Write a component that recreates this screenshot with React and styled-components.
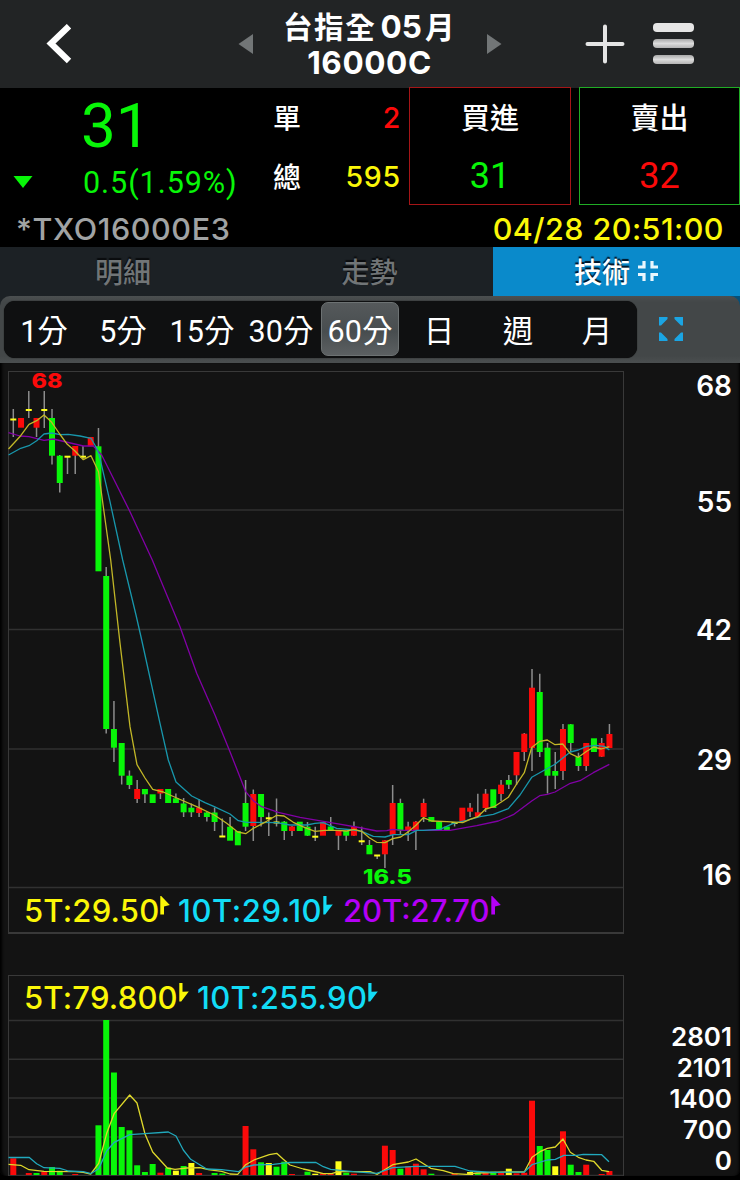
import React from "react";
import styled, { createGlobalStyle } from "styled-components";

const GREEN = "#08f608";
const RED = "#fb0a0a";
const YELLOW = "#fbf708";
const CYAN = "#12dcf6";
const PURPLE = "#b400f6";
const UI = `Inter, "Noto Sans CJK TC", sans-serif`;
const NUM = `Roboto, "Noto Sans CJK TC", sans-serif`;

const Global = createGlobalStyle`
  * { box-sizing: border-box; }
  body { margin: 0; background: #000; font-family: ${UI}; }
`;

const Screen = styled.div`
  width: 740px;
  height: 1180px;
  overflow: hidden;
  background: #000;
  display: flex;
  flex-direction: column;
  color: #fff;
`;

/* ---------- navigation bar ---------- */
const NavBar = styled.header`
  height: 88px;
  flex: none;
  background: #222425;
  display: flex;
  align-items: center;
  padding-left: 46px;
`;
const NavIcon = styled.svg`
  flex: none;
  display: block;
  margin-left: ${(p) => p.$gap || 0}px;
`;
const Title = styled.h1`
  margin: 0 0 0 29px;
  width: 175px;
  text-align: center;
  font-size: 31.5px;
  line-height: 37px;
  font-weight: 700;
  white-space: nowrap;
`;
const TitleLine = styled.div`
  height: 37px;
  letter-spacing: ${(p) => p.$ls || 0}px;
`;
const Han = styled.span`
  font-family: "Noto Sans CJK TC", sans-serif;
  font-weight: 700;
  font-size: 29.5px;
  letter-spacing: 1.7px;
`;
const Month = styled.span`
  margin: 0 3px 0 4px;
`;

/* ---------- quote ---------- */
const Quote = styled.section`
  height: 159px;
  flex: none;
  background: #000;
`;
const QuoteTop = styled.div`
  height: 117px;
  display: flex;
`;
const LastBlock = styled.div`
  width: 273px;
  flex: none;
`;
const LastPrice = styled.div`
  font-family: ${NUM};
  color: ${GREEN};
  font-size: 62px;
  line-height: 75px;
  height: 75px;
  padding-left: 81px;
`;
const ChangeRow = styled.div`
  display: flex;
  align-items: center;
  height: 38px;
  padding-left: 13px;
  font-family: ${NUM};
  font-size: 30.5px;
  color: ${GREEN};
  letter-spacing: 0.95px;
`;
const Change = styled.span`
  margin-left: 50px;
`;
const Volumes = styled.div`
  width: 128px;
  flex: none;
`;
const VolumeRow = styled.div`
  height: 59px;
  display: flex;
  align-items: center;
  justify-content: space-between;
  font-size: 28px;
  font-weight: 500;
  padding-bottom: 1px;
`;
const VolumeValue = styled.span`
  font-size: 28.5px;
  color: ${(p) => p.$color};
  letter-spacing: 0.8px;
  padding-top: 1px;
`;
const OrderButton = styled.button`
  width: ${(p) => p.$w}px;
  height: 118px;
  margin: -1px 0 0 8px;
  padding: 0;
  background: #000;
  border: 1px solid ${(p) => p.$edge};
  color: #fff;
  font-family: "Noto Sans CJK TC", sans-serif;
  font-weight: 500;
  font-size: 29px;
  display: flex;
  flex-direction: column;
  align-items: center;
`;
const OrderLabel = styled.span`
  height: 59px;
  line-height: 57px;
`;
const OrderPrice = styled.span`
  height: 58px;
  line-height: 61px;
  font-family: ${NUM};
  font-weight: 400;
  font-size: 36px;
  color: ${(p) => p.$color};
`;
const QuoteFoot = styled.div`
  height: 42px;
  display: flex;
  justify-content: space-between;
  align-items: center;
  padding: 5px 16px 0 16px;
  font-size: 30.5px;
  font-weight: 500;
`;
const Code = styled.span`
  color: #a0a3a4;
  letter-spacing: 0.6px;
`;
const Time = styled.span`
  color: ${YELLOW};
  letter-spacing: 0.45px;
`;

/* ---------- tabs ---------- */
const Tabs = styled.nav`
  height: 49px;
  flex: none;
  display: grid;
  grid-template-columns: 246px 247px 247px;
`;
const Tab = styled.div`
  display: flex;
  align-items: center;
  justify-content: center;
  gap: 7px;
  padding-bottom: 2px;
  font-size: 28px;
  font-weight: 500;
  color: ${(p) => (p.$on ? "#fff" : "#717577")};
  background: ${(p) => (p.$on ? "#0a8acb" : "#1c2125")};
  text-shadow: 0 -2px 1px ${(p) => (p.$on ? "#012" : "#0a0c0e")};
`;

/* ---------- interval picker ---------- */
const IntervalWrap = styled.div`
  height: 67px;
  flex: none;
  background: linear-gradient(90deg, #1c2125 0 493px, #05507a 493px);
`;
const IntervalBar = styled.div`
  height: 67px;
  background: linear-gradient(#4b4f50 0, #434748 6px, #434748 60px, #4a4e4f 66px);
  border-radius: 10px 10px 0 0;
  display: flex;
  align-items: center;
  padding: 0 0 1px 4px;
`;
const Segments = styled.div`
  width: 633px;
  height: 57px;
  background: #0f1011;
  border-radius: 11px;
  display: grid;
  grid-template-columns: repeat(8, 79px);
  padding-top: 1px;
  box-shadow: 0 0 1px #000;
`;
const Segment = styled.div`
  height: 54px;
  margin: 0 0 0 1px;
  border-radius: 7px;
  display: flex;
  align-items: center;
  justify-content: center;
  white-space: nowrap;
  font-family: ${NUM};
  font-size: 30.5px;
  padding-top: 1px;
  border: 1px solid ${(p) => (p.$on ? "#6d7273" : "transparent")};
  background: ${(p) => (p.$on ? "linear-gradient(#55595b, #484d4f 55%, #5c6062)" : "none")};
`;

/* ---------- charts ---------- */
const ChartArea = styled.main`
  height: 813px;
  flex: none;
  background: #131313;
  box-shadow: inset 4px 0 3px -2px #000, inset -3px 0 3px -2px #000;
  border-radius: 0 0 6px 6px;
  padding: 8px 0 0 8px;
`;
const Panel = styled.section`
  display: flex;
  height: ${(p) => p.$h}px;
  margin-bottom: ${(p) => p.$mb || 0}px;
`;
const Frame = styled.div`
  width: 616px;
  flex: none;
  border: 1px solid #393939;
  border-bottom-width: ${(p) => p.$bottom}px;
`;
const Plot = styled.svg`
  display: block;
  margin-left: -1px;
  overflow: visible;
`;
const Legend = styled.div`
  display: flex;
  align-items: center;
  height: 44px;
  padding: 0 0 ${(p) => p.$lift || 0}px 15px;
  font-size: 31px;
  font-weight: 500;
`;
const LegendItem = styled.span`
  display: flex;
  align-items: center;
  white-space: nowrap;
  color: ${(p) => p.$color};
  width: ${(p) => p.$w}px;
  letter-spacing: ${(p) => p.$ls || 0}px;
`;
const Flag = styled.svg`
  flex: none;
  margin: -9px 0 0 1px;
`;
const Axis = styled.div`
  flex: 1;
  display: grid;
  grid-template-rows: ${(p) => p.$rows};
  padding: ${(p) => p.$top}px 8px 0 0;
  text-align: right;
  font-weight: 600;
  font-size: ${(p) => p.$size}px;
  line-height: 30px;
`;

const STEP = 7.742;
const cx = (i) => 13.3 + i * STEP;

// [kind, body top, body bottom, wick top, wick bottom]
const candles = [
  ["y", 418.5, 420.5, 409, 437], ["r", 418, 427.7], ["y", 409, 411, 391, 418], ["r", 418, 427.7, 418, 437],
  ["y", 409, 411, 391, 428], ["g", 418, 455.7, 409, 464.5], ["g", 455.7, 483, 455, 492.5], ["y", 455.7, 457.7, 456, 474],
  ["r", 446, 455.7, 446, 474], ["y", 455.7, 457.7, 446, 459], ["r", 437, 446.3], ["g", 446.3, 571.3, 428, 571],
  ["g", 576, 729, 567, 733.5], ["g", 729, 747.7, 701, 762], ["g", 743, 775.7, 743, 784.5], ["g", 775.7, 785, 770.5, 789],
  ["r", 789, 799, 780, 803], ["g", 789, 794.3, 789, 803], ["g", 794.3, 803], ["r", 789, 793.5, 789, 799],
  ["g", 789, 803], ["g", 798.3, 803, 793.5, 803], ["g", 803.5, 812.3, 798, 817], ["g", 807.7, 812.3, 803.5, 817],
  ["r", 807.7, 813, 799, 817], ["g", 812.5, 817, 812, 821.5], ["g", 812.5, 822, 807.5, 831], ["y", 835.5, 837.5, 818.5, 837],
  ["g", 826.7, 840.7, 817, 840], ["g", 831, 845.3], ["g", 803, 826.7, 780, 831], ["r", 794, 826, 789.5, 841],
  ["g", 794, 817, 794, 826.5], ["y", 817.3, 819.3, 812.5, 836], ["y", 821.5, 823.5, 798.5, 826.5], ["g", 821.7, 831, 821, 840],
  ["r", 826.5, 831, 826, 836], ["g", 821.7, 831], ["g", 826.7, 835.7, 822, 836], ["y", 835.7, 837.7, 826.7, 841],
  ["r", 822, 835.7], ["g", 826.5, 831, 817, 831], ["r", 831, 835.7, 831, 850], ["g", 831, 835.7, 831, 841],
  ["r", 826.7, 835.7, 821.5, 836], ["y", 840.3, 842.3, 826.7, 845], ["g", 845, 854.3, 840, 854], ["y", 854.5, 856.5, 856, 859],
  ["r", 840.3, 854.3, 840, 868], ["r", 803, 835, 785, 845], ["g", 803, 830.7, 798.7, 835], ["r", 826.5, 831, 821.7, 841],
  ["r", 821.7, 831, 821, 850], ["r", 803, 817, 798.7, 822], ["g", 817, 821.7], ["g", 821.7, 830.7],
  ["g", 826.5, 830.7], ["y", 822, 824, 822, 826.5], ["r", 807.7, 821.3], ["r", 807.7, 811.7, 803, 817],
  ["r", 812.3, 816.7, 793.7, 817], ["r", 793.7, 808, 789, 812], ["g", 789.3, 808], ["r", 784.7, 794, 780, 801],
  ["g", 780, 784.7, 775, 789], ["r", 752, 775.3, 752, 785], ["r", 733.7, 752, 733, 761], ["r", 687.7, 748, 669, 771],
  ["g", 692, 752, 673.7, 757], ["g", 747.7, 775.7, 743, 793.5], ["g", 771, 775.7, 752, 789], ["r", 729, 771, 724, 780],
  ["g", 724.3, 743, 724, 752], ["g", 757, 766, 752.7, 771], ["r", 743, 766, 743, 771], ["g", 738.3, 752],
  ["r", 743, 756.7, 738, 757], ["r", 734, 748, 724, 748],
];
const price5 = "8.5,449 20.7,435.7 29,424.3 36.7,420.7 44,415 51.7,422.3 59.7,434 67.3,444.3 75,451 83.3,459.7 91,455.7 98.5,471.7 105,519 110.7,560 120,643 130,726.7 137,764.7 145,778 152.7,789.3 163.3,792 176.7,798 196.7,806.7 214.3,815 226.7,823.3 237.7,832 245.7,833.7 253.3,828.3 266.7,821.3 276.7,815.3 284,816 293.3,822.3 305,827.7 315,831.3 325,830.3 336.7,830.3 346.7,831 354,829.3 361.7,831.3 369.3,837.7 376.7,842.3 385,842.7 392.7,838.7 400.7,837 408.3,831.7 416,825.3 423.3,817.7 431.7,821 447,821.7 462.7,822.7 470,819.3 477.7,816.7 485.7,809 494,806.7 501.7,801.7 508.3,797.3 516,785 524.3,772.7 531.7,747.5 539.7,741.3 547.3,740 555,744.7 562.7,744 570.3,753.7 578.3,757.3 586.7,751.3 593.7,747 601.3,749 609.3,746.7";
const price10 = "8.5,455 20.7,448.3 29,445.7 36.7,440.7 44,434 51.7,433 60,434.7 68.3,434.3 80,436 91,438.3 96.7,448.3 100,458.3 110,501.7 122.7,560 136,615 141.7,640 160,723.3 168.3,760 176,782 191.7,796 205,802.7 214.3,806.7 230,814 238.3,820.7 246.7,822.3 276.7,822.7 290,825 306.7,825 315,823.3 323.3,822.7 336.7,828.3 354,830 361.7,831.3 373.3,836.3 385,837 393.3,834.7 408.3,834.7 416.7,830.3 423.3,830.3 440,829.3 453.3,823.3 466.7,820.3 480,816.7 493.3,814.3 508.3,808.7 520,795 531.7,777.3 543.3,770.7 555,764.3 570.3,752 578.3,750 586.7,746.3 596.7,745.3 605,746.7 609.3,750";
const price20 = "8.5,432.7 20,436 29,436.7 44,440.3 53.3,439 83.3,446 93.3,446 101.7,455 130,511.7 152.3,560 180,626.7 196.7,673.3 215,715 230,751.7 245.7,791.7 253.3,800.7 261.7,806.7 278.3,812.3 300,817.3 336.7,823.7 361.7,828 376.7,831 386.7,830.7 392.7,829.3 403.3,830.3 450,830.3 476.7,825.7 498.3,821 513.3,814.7 531.7,801 539.7,795.7 547.3,794.3 555,792 570.3,783.3 580,780.7 593.3,772.7 609.3,764.3";

// [slot, kind, top]
const volumes = [
  [0, "r", 1158.3], [2, "r", 1173], [3, "g", 1173], [4, "r", 1171.7], [5, "g", 1167], [6, "g", 1170.7], [8, "r", 1174],
  [11, "g", 1125.3], [12, "g", 1020], [13, "g", 1072.5], [14, "g", 1127], [15, "g", 1130.3], [16, "g", 1165.3],
  [17, "g", 1172], [18, "g", 1164], [19, "r", 1172.7], [20, "g", 1167.7], [21, "y", 1170.7], [22, "g", 1166],
  [23, "y", 1163], [24, "r", 1173], [26, "g", 1173], [27, "g", 1173.5], [30, "r", 1126], [31, "r", 1149.3],
  [32, "g", 1162.3], [33, "y", 1163], [34, "g", 1166.7], [35, "g", 1161.7], [36, "r", 1174], [38, "g", 1171.7],
  [39, "y", 1173.7], [40, "r", 1173.5], [41, "r", 1174], [42, "y", 1161.3], [43, "g", 1172.7], [44, "r", 1173.7],
  [48, "r", 1145.7], [49, "r", 1150], [50, "g", 1168.7], [51, "r", 1166.3], [52, "r", 1163.7], [53, "r", 1169.3],
  [54, "g", 1173.7], [57, "r", 1173.7], [59, "y", 1172], [60, "g", 1173], [61, "r", 1172.3], [62, "g", 1171.7],
  [63, "r", 1173], [64, "y", 1168.7], [65, "r", 1173.3], [66, "r", 1172.7], [67, "r", 1100.7], [68, "g", 1146],
  [69, "g", 1150], [70, "y", 1166.3], [71, "r", 1131.3], [72, "g", 1164.7], [73, "g", 1172], [74, "r", 1164.7],
  [76, "r", 1174], [77, "r", 1171],
];
const vol5 = "8.5,1164.3 20.7,1165.3 29,1169.7 44,1171.3 75,1171.7 83.3,1172.3 90.7,1174 98.7,1163.3 106.7,1133.3 114.3,1113.3 129.7,1095 137,1103 145,1134 152.7,1152 167.3,1168 175,1169.3 186.7,1168 200,1167.7 208.3,1169.7 221.7,1171.3 230,1174 237.7,1174.3 245.7,1164.7 254,1160 269.3,1154.7 276.7,1153.3 283.3,1159.3 290,1165 303.3,1169 316.7,1172 323.3,1173.7 331.7,1173.7 338.3,1171.7 370,1171.7 377.3,1174.3 392.7,1164.7 408.3,1162 416,1159 430.7,1168.3 443.3,1170.7 453.3,1173.7 466.7,1174.3 476.7,1173 506.7,1172 524.3,1172 532,1157.3 540,1151.7 547.3,1148.3 555.3,1147 563,1139 570.3,1152.3 578.3,1157.3 586,1160 593.7,1161.3 601.7,1170.3 609,1171.7";
const vol10 = "8.5,1157.5 29,1157.3 36.7,1163.7 44,1167.7 60,1168.3 68.3,1171 83.3,1171.7 90.7,1173.7 98.7,1168.7 106.7,1151 114.3,1142.3 129.7,1134.7 145,1133.7 168.3,1132 176,1136 183.3,1150 190.7,1159.3 206.7,1169 221.7,1169.7 238.3,1171.7 245.7,1167 254,1165 273.3,1164.3 290,1162.3 316,1162.5 323.3,1166.7 330.7,1169.3 353.3,1171.7 376.7,1173.3 392.7,1167.7 416,1166.3 455,1166.3 470,1171 493.3,1172.3 524.3,1172 532,1164.7 547.3,1160 555.3,1159.3 564,1155.3 577,1155.3 583.3,1154.3 601.7,1154.7 609,1161.7";

const FILL = { r: RED, g: GREEN, y: "#ffff1a" };

const Series = ({ points, color }) => (
  <polyline points={points} fill="none" stroke={color} strokeWidth="1.3" strokeLinejoin="round" />
);

const GridLine = ({ y }) => <line x1="9" x2="623" y1={y} y2={y} stroke="#313131" strokeWidth="1.4" />;

const PriceChart = () => (
  <Plot width="616" height="516" viewBox="8 372 616 516">
    {[510, 629.5, 749, 887.5].map((y) => <GridLine key={y} y={y} />)}
    {candles.map(([k, t, b, wt, wb], i) => (
      <g key={i}>
        {wt && <line x1={cx(i)} x2={cx(i)} y1={wt} y2={wb} stroke="#8d8d8d" strokeWidth="1.5" />}
        <rect x={cx(i) - 3} width="6" y={t} height={b - t} fill={FILL[k]} />
      </g>
    ))}
    <Series points={price20} color="#8200a6" />
    <Series points={price10} color="#1897ac" />
    <Series points={price5} color="#c2b727" />
    <text x="31.5" y="388.3" fontSize="20.5" fontWeight="800" fill={RED} textLength="31" lengthAdjust="spacingAndGlyphs">68</text>
    <text x="363" y="884" fontSize="20.5" fontWeight="800" fill={GREEN} textLength="49" lengthAdjust="spacingAndGlyphs">16.5</text>
  </Plot>
);

const VolumeChart = () => (
  <Plot width="616" height="156" viewBox="8 1020 616 156">
    {[1020.5, 1059.3, 1098, 1137, 1175.4].map((y) => <GridLine key={y} y={y} />)}
    {volumes.map(([i, k, t]) => (
      <rect key={i} x={cx(i) - 3} width="6" y={t} height={1175 - t} fill={FILL[k]} />
    ))}
    <Series points={vol5} color="#dfd92b" />
    <Series points={vol10} color="#21a9bd" />
  </Plot>
);

const TrendFlag = ({ up }) => (
  <Flag width="10" height="19" viewBox="0 0 10 19" fill="currentColor">
    {up ? <path d="M0.3 0H1.2L9.8 9L4 10.5V18.5H0.3Z" /> : <path d="M0.3 0H3.5V8.8L9.8 8.4L2.2 18.5H0.3Z" />}
  </Flag>
);

export default function App() {
  return (
    <Screen>
      <Global />
      <NavBar>
        <NavIcon width="26" height="40" viewBox="0 0 26 40">
          <path d="M23 2.2 L5 19.5 L23 37" fill="none" stroke="#fff" strokeWidth="6.3" />
        </NavIcon>
        <NavIcon $gap={166} width="15" height="20" viewBox="0 0 15 20">
          <path d="M15 0V20L0.5 10Z" fill="#727677" />
        </NavIcon>
        <Title>
          <TitleLine><Han>台指全</Han><Month>05</Month><Han>月</Han></TitleLine>
          <TitleLine $ls={0.6}>16000C</TitleLine>
        </Title>
        <NavIcon $gap={30} width="15" height="20" viewBox="0 0 15 20">
          <path d="M0 0V20L14.5 10Z" fill="#727677" />
        </NavIcon>
        <NavIcon $gap={83} width="40" height="40" viewBox="0 0 40 40">
          <path d="M20 2.5V37.5M2.5 20H37.5" stroke="#e4e4e4" strokeWidth="4" strokeLinecap="round" />
        </NavIcon>
        <NavIcon $gap={28} width="41" height="42" viewBox="0 0 41 42">
          <defs>
            <linearGradient id="bar" x1="0" y1="0" x2="0" y2="1">
              <stop offset="0" stopColor="#a9a9a9" />
              <stop offset="0.5" stopColor="#dcdcdc" />
              <stop offset="1" stopColor="#b4b4b4" />
            </linearGradient>
          </defs>
          <rect width="41" height="9" rx="4" fill="#e6e6e6" />
          <rect y="16" width="41" height="9" rx="4" fill="url(#bar)" />
          <rect y="32" width="41" height="9" rx="4" fill="url(#bar)" />
        </NavIcon>
      </NavBar>

      <Quote>
        <QuoteTop>
          <LastBlock>
            <LastPrice>31</LastPrice>
            <ChangeRow>
              <svg width="20" height="12" viewBox="0 0 20 12"><path d="M0.5 0H19.5L10 12Z" fill={GREEN} /></svg>
              <Change>0.5(1.59%)</Change>
            </ChangeRow>
          </LastBlock>
          <Volumes>
            <VolumeRow>單<VolumeValue $color={RED}>2</VolumeValue></VolumeRow>
            <VolumeRow>總<VolumeValue $color={YELLOW}>595</VolumeValue></VolumeRow>
          </Volumes>
          <OrderButton $w={162} $edge="#a51517">
            <OrderLabel>買進</OrderLabel>
            <OrderPrice $color={GREEN}>31</OrderPrice>
          </OrderButton>
          <OrderButton $w={161} $edge="#20ad25">
            <OrderLabel>賣出</OrderLabel>
            <OrderPrice $color={RED}>32</OrderPrice>
          </OrderButton>
        </QuoteTop>
        <QuoteFoot>
          <Code>*TXO16000E3</Code>
          <Time>04/28 20:51:00</Time>
        </QuoteFoot>
      </Quote>

      <Tabs>
        <Tab>明細</Tab>
        <Tab>走勢</Tab>
        <Tab $on>
          技術
          <svg width="22" height="22" viewBox="0 0 22 22">
            <path d="M1 7H7V1M15 1V7H21M1 14.5H7V21M15 21V14.5H21" fill="none" stroke="#e9f6fd" strokeWidth="3.2" />
          </svg>
        </Tab>
      </Tabs>

      <IntervalWrap>
        <IntervalBar>
          <Segments>
            {["1分", "5分", "15分", "30分", "60分", "日", "週", "月"].map((t) => (
              <Segment key={t} $on={t === "60分"}>{t}</Segment>
            ))}
          </Segments>
          <NavIcon $gap={21} width="26" height="26" viewBox="0 0 26 26">
            <path d="M1 1H9.5V3L3 9.5H1ZM16.5 1H25V9.5H23L16.5 3ZM25 16.5V25H16.5V23L23 16.5ZM9.5 25H1V16.5H3L9.5 23Z" fill="#1ba5e3" />
          </NavIcon>
        </IntervalBar>
      </IntervalWrap>

      <ChartArea>
        <Panel $h={563} $mb={41}>
          <Frame $bottom={2}>
            <PriceChart />
            <Legend>
              <LegendItem $color={YELLOW} $w={154} $ls={0.2}>5T:29.50<TrendFlag up /></LegendItem>
              <LegendItem $color={CYAN} $w={165} $ls={0.6}>10T:29.10<TrendFlag /></LegendItem>
              <LegendItem $color={PURPLE} $w={165}>20T:27.70<TrendFlag up /></LegendItem>
            </Legend>
          </Frame>
          <Axis $rows="116px 128px 130px 115px 30px" $top={0} $size={28}>
            <span>68</span><span>55</span><span>42</span><span>29</span><span>16</span>
          </Axis>
        </Panel>
        <Panel $h={201}>
          <Frame $bottom={0}>
            <Legend $lift={2}>
              <LegendItem $color={YELLOW} $w={173} $ls={0.2}>5T:79.800<TrendFlag /></LegendItem>
              <LegendItem $color={CYAN} $w={190} $ls={0.35}>10T:255.90<TrendFlag /></LegendItem>
            </Legend>
            <VolumeChart />
          </Frame>
          <Axis $rows="31px 31px 31px 31px 30px" $top={47} $size={26}>
            <span>2801</span><span>2101</span><span>1400</span><span>700</span><span>0</span>
          </Axis>
        </Panel>
      </ChartArea>
    </Screen>
  );
}
